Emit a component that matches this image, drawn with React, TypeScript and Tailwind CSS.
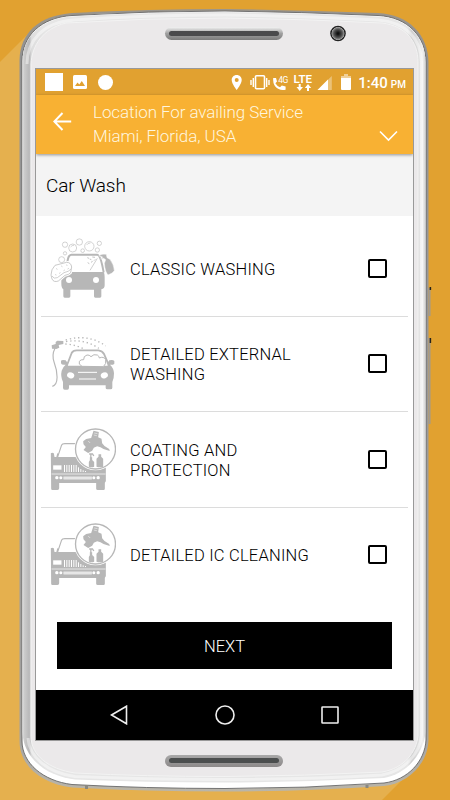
import React from 'react';

interface Service {
  title: string;
  icon: React.ReactNode;
}

const PhoneBody: React.FC = () => (
  <svg className="absolute inset-0" width="450" height="800" viewBox="0 0 450 800" fill="none">
    <defs>
      <linearGradient id="side" x1="22" y1="0" x2="426" y2="0" gradientUnits="userSpaceOnUse">
        <stop offset="0" stopColor="#e4e4e4" />
        <stop offset="0.006" stopColor="#cbcbcb" />
        <stop offset="0.018" stopColor="#b8b8b9" />
        <stop offset="0.024" stopColor="#dedede" />
        <stop offset="0.06" stopColor="#e6e6e6" />
        <stop offset="0.955" stopColor="#e6e6e6" />
        <stop offset="0.964" stopColor="#cfcfcf" />
        <stop offset="0.98" stopColor="#dcdcdc" />
        <stop offset="0.992" stopColor="#f0f0f0" />
        <stop offset="1" stopColor="#cccccc" />
      </linearGradient>
      <linearGradient id="edge" x1="0" y1="9" x2="0" y2="791" gradientUnits="userSpaceOnUse">
        <stop offset="0" stopColor="#9a958c" />
        <stop offset="0.06" stopColor="#929292" />
        <stop offset="0.92" stopColor="#a3a19e" />
        <stop offset="1" stopColor="#b9b5aa" />
      </linearGradient>
      <linearGradient id="slot" x1="0" y1="0" x2="0" y2="1">
        <stop offset="0" stopColor="#f2f2f2" />
        <stop offset="0.5" stopColor="#a0a0a0" />
        <stop offset="1" stopColor="#7b7b7b" />
      </linearGradient>
      <linearGradient id="slotLow" x1="0" y1="0" x2="0" y2="1">
        <stop offset="0" stopColor="#a9a9a9" />
        <stop offset="1" stopColor="#8c8989" />
      </linearGradient>
      <radialGradient id="lens">
        <stop offset="0.1" stopColor="#101010" />
        <stop offset="0.55" stopColor="#555" />
        <stop offset="0.8" stopColor="#999" />
        <stop offset="0.86" stopColor="#222" />
        <stop offset="1" stopColor="#222" />
      </radialGradient>
    </defs>

    <path d="M0 0H450V800H382L410 772L380 740L60 60L30 32L0 62Z" fill="#e1a130" />

    {/* side buttons */}
    <path d="M429.500 288V316M429.500 338V424" stroke="#a09a90" strokeWidth="2" />
    <path d="M430.400 287V290M430.400 338V343" stroke="#26221c" strokeWidth="1.500" />

    <path
      d="M19.500 60C20 33 39 15.500 72 13Q148 9 225 9Q302 10 378 13C409 14.500 428 35 428.500 62V740C428 762 410 783 384 786Q305 791.500 225 791.500Q145 791.500 72 787.500C42 784 19.500 766 19.500 741Z"
      fill="url(#edge)"
    />
    <path
      d="M22 61C22 36 41 17.500 72 15.500Q148 11 225 11Q302 12 378 15.500C408 17 426 37 426 62V740C425 761 408 780 384 783Q305 788.500 225 788.500Q145 788.500 72 784.500C43 781 22 763 22 741Z"
      fill="#fff"
      stroke="#686868"
      strokeWidth="0.900"
    />
    <path
      d="M22.500 61C22.500 37 41 18.500 72 16.500Q148 12 225 12Q302 13 378 16.500C407 18 425.500 37 425.500 62V732C424 753 407 774 384 778Q305 782 225 782.500Q145 782.500 75 779.500C45 776 23 757 22.500 732Z"
      fill="url(#side)"
    />
    {/* soft highlights between bevel and face */}
    <path
      d="M27 64C27 41 43 22 74 20Q148 15 225 15Q302 16 378 20C406 22 421 39 421.500 62V735C420 753 405 771 382 775Q305 779.500 225 779.500Q145 779.500 75 776.500C48 773 29 757 28 738"
      stroke="#fff"
      strokeOpacity="0.45"
      strokeWidth="3"
    />
    <path
      d="M31 64C32 46 42 29 66 23Q145 18 225 18Q305 19 382 23C406 26 418 42 418 62V736C416 752 405 768 382 772Q305 776 225 776.500Q145 776.500 75 773C48 769 31 755 31 736Z"
      fill="#ebe9ea"
      stroke="#f3f3f3"
      strokeWidth="1"
    />
    <path d="M86.500 785V789M367 785V788" stroke="#8a8880" strokeWidth="3" />

    <rect x="165" y="27" width="118" height="13" rx="6.500" fill="url(#slot)" />
    <rect x="169" y="31" width="110" height="5" rx="2.500" fill="#4a4a4c" />
    <rect x="165" y="755" width="118" height="12" rx="6" fill="url(#slotLow)" />
    <rect x="169" y="758" width="110" height="5" rx="2.500" fill="#4b4e4e" />
    <circle cx="338" cy="33.500" r="7.800" fill="url(#lens)" />
  </svg>
);

const WashIcon = () => (
  <svg className="h-[65px] w-[70px] shrink-0" viewBox="30 34 210 195" fill="none" stroke="#b7b7b7">
    <g strokeWidth="1.800">
      <circle cx="87" cy="60" r="8" />
      <circle cx="110" cy="70" r="12" />
      <circle cx="130" cy="52" r="9.500" />
      <circle cx="160" cy="65" r="14" />
      <circle cx="190" cy="56" r="6.500" />
      <circle cx="184" cy="76" r="6.500" />
      <circle cx="140" cy="78" r="5.500" />
      <circle cx="87" cy="86" r="5" />
      <circle cx="77" cy="105" r="9" />
      <path d="M152 61Q155 55 163 55M104 67Q108 61 114 62" />
    </g>
    <path d="M94 114Q96 91 106 90H184Q194 91 203 143" strokeWidth="6" />
    <path d="M80 142H203Q206 146 206 162V182Q206 192 196 194V215Q196 219 192 219H178Q174 219 174 215V195H103V215Q103 219 99 219H86Q82 219 82 215V194Q76 190 76 177V154Z" fill="#b7b7b7" stroke="none" />
    <circle cx="99" cy="166" r="9" fill="#fff" stroke="none" />
    <circle cx="180" cy="166" r="9" fill="#fff" stroke="none" />
    <path d="M57 129L94 113Q105 113 107 127L104 144Q99 150 87 152L67 169Q53 174 48 163L45 151Q47 138 57 129Z" fill="#fff" stroke="#fff" strokeWidth="8" />
    <path d="M57 122L92 113Q105 113 107 127L104 144Q99 150 87 152L67 169Q53 174 48 163L45 151Q45 134 57 122Z" fill="#fff" strokeWidth="2.200" />
    <path d="M48 154Q53 164 64 159L84 144Q99 141 105 133" strokeWidth="2" />
    <path d="M61 132L64 134M76 124L79 126M91 121L94 122M70 146L73 144M83 138L86 136M95 133L98 131M58 150L61 151" strokeWidth="2.500" />
    <path d="M162 137L184 101" strokeWidth="2" />
    <path d="M169 97L177 98M161 103L166 105M154 99L159 101M165 113L170 110M155 114L160 117M174 108L178 104" strokeWidth="2.500" />
    <path d="M188 94Q197 86 211 89L213 99L222 104Q234 120 235 138Q229 147 216 151Q207 142 205 116L209 105L203 101L194 103L200 97Z" fill="#b7b7b7" stroke="#fff" strokeWidth="1.500" />
  </svg>
);

const ExternalIcon = () => (
  <svg className="h-[65px] w-[70px] shrink-0" viewBox="30 21 210 195" fill="none" stroke="#b7b7b7">
    <path d="M57 73Q46 94 55 117C65 143 69 181 49 187" strokeWidth="3.500" />
    <path d="M47 64L59 60V54L64 50L82 51V60L68 63L70 71L61 75L48 74Z" fill="#b7b7b7" stroke="none" />
    <g strokeWidth="4" strokeDasharray="4 8.500">
      <path d="M89 48Q158 28 209 66" />
      <path d="M90 53Q145 43 188 73" />
      <path d="M88 60Q120 62 146 76" />
    </g>
    <path d="M92 126L107 87Q111 79 122 79H187Q199 80 204 90L220 127" strokeWidth="5.500" />
    <path d="M75 110Q78 107 89 109L95 117V125H215V116L220 109Q231 106 235 111V119Q230 124 222 122Q233 132 234 148Q234 165 229 174V191Q229 196 224 196H214Q209 196 209 191V184H99V191Q99 197 94 197H86Q81 197 81 191V174Q73 157 77 140Q80 129 89 122Q77 124 75 118Z" fill="#b7b7b7" stroke="none" />
    <path d="M138 127Q126 121 130 112Q134 106 143 107Q142 96 153 93Q160 92 165 98Q173 89 184 93Q190 97 190 102Q203 96 209 107Q212 120 202 128Z" fill="#fff" strokeWidth="3" />
    <ellipse cx="104" cy="154" rx="11" ry="9" fill="#fff" stroke="none" transform="rotate(20 104 154)" />
    <ellipse cx="205" cy="154" rx="11" ry="9" fill="#fff" stroke="none" transform="rotate(-20 205 154)" />
    <path d="M126 145H183M129 165H180" stroke="#fff" strokeWidth="3" />
  </svg>
);

const CoatingIcon = () => (
  <svg className="h-[65px] w-[70px] shrink-0" viewBox="31.500 39 210 195" fill="none" stroke="#b7b7b7">
    <path d="M66 130L78 94Q80 89 88 89H132M64 130L67 118" strokeWidth="3.500" />
    <path d="M46 118Q50 115 55 118L57 129H192L207 145Q211 150 211 160V202L208 206V224Q208 228 204 228H187Q182 228 182 224V207H71V223Q71 228 66 228H51Q47 228 47 224Z" fill="#b7b7b7" stroke="none" />
    <path d="M53 154H78V167H53Z" fill="#fff" stroke="none" />
    <path d="M87 153V174M94 153V174M101 153V174M108 153V174M115 153V174M122 153V174M129 160V174M136 165V174M143 169V174M150 171V174" stroke="#fff" strokeWidth="3" />
    <path d="M48 180H210" stroke="#fff" strokeWidth="2" />
    <path d="M84 192H169" stroke="#fff" strokeWidth="8" />
    <path d="M84 192H169" strokeWidth="2" />
    <g fill="#fff" stroke="none">
      <circle cx="64" cy="191" r="5" />
      <circle cx="76" cy="191" r="4.500" />
      <circle cx="175" cy="191" r="4.500" />
      <circle cx="188" cy="191" r="5" />
    </g>
    <circle cx="180" cy="105" r="64" fill="#fff" stroke="none" />
    <circle cx="180" cy="105" r="60" strokeWidth="4" />
    <path d="M174 50L190 54L188 70L198 74L200 88L207 96L221 105L223 111L204 105L195 100L185 97L175 101L170 110L158 117L144 108L151 99L144 91L143 82L152 75L167 72Z" fill="#b7b7b7" stroke="none" />
    <path d="M176 57L186 59M175 63L184 65M158 81L164 87" stroke="#fff" strokeWidth="1.500" />
    <path d="M161 120H171L175 126M166 121V132" strokeWidth="4" />
    <path d="M163 130H170V138L176 144V158Q168 162 160 158V144L163 139ZM189 121H197V128L203 134V158Q193 162 183 158V134L189 128Z" fill="#b7b7b7" stroke="none" />
  </svg>
);

const services: Service[] = [
  { title: 'CLASSIC WASHING', icon: <WashIcon /> },
  { title: 'DETAILED EXTERNAL WASHING', icon: <ExternalIcon /> },
  { title: 'COATING AND PROTECTION', icon: <CoatingIcon /> },
  { title: 'DETAILED IC CLEANING', icon: <CoatingIcon /> },
];

const StatusBar: React.FC = () => (
  <div className="flex h-[26px] shrink-0 items-center bg-[#e1a130] pl-[9px] pr-[7px] text-white">
    <div className="h-[18px] w-[18px] bg-white" />
    <svg className="ml-[10px]" width="14" height="14" viewBox="0 0 14 14">
      <rect width="14" height="14" rx="1.500" fill="#fff" />
      <path d="M2 11L4.500 7.500L6.300 9.500L8.800 6L12 11Z" fill="#e1a130" />
    </svg>
    <div className="ml-[11px] h-[15px] w-[15px] rounded-full bg-white" />
    <svg className="ml-auto" width="101" height="20" viewBox="231 72 101 20" fill="none" stroke="#fff">
      <path d="M236.700 75C233.700 75 231.700 77.200 231.700 80C231.700 83.800 236.700 90 236.700 90S241.700 83.800 241.700 80C241.700 77.200 239.700 75 236.700 75ZM236.700 82A2 2 0 1 1 236.700 78A2 2 0 0 1 236.700 82Z" fill="#fff" stroke="none" />
      <rect x="255.500" y="75.800" width="9" height="13" rx="1" strokeWidth="1.600" />
      <path d="M253.300 78V87M266.700 78V87M251 80V85M269 80V85" strokeWidth="1.400" />
      <path d="M273.200 78H276L277 81.600L275.400 83.200Q277 86 280 87.200L281.800 85.500L285.600 86.600V89.700Q279 91 275.300 86.500Q272.700 83 273.200 78Z" fill="#fff" stroke="none" />
      <text x="278.300" y="82.500" fontSize="8.500" fill="#fff" stroke="none" fontFamily="Roboto, sans-serif" textLength="10">4G</text>
      <text x="293.500" y="82.500" fontSize="11" fontWeight="600" fill="#fff" stroke="none" fontFamily="Roboto, sans-serif" textLength="18.500" lengthAdjust="spacingAndGlyphs">LTE</text>
      <path d="M299.700 84V88M308 87V91" strokeWidth="2" />
      <path d="M296.500 87H303L299.700 91ZM304.800 88H311.200L308 84Z" fill="#fff" stroke="none" />
      <path d="M317.500 90L331.800 76V90Z" fill="#fff" fillOpacity="0.35" stroke="none" />
      <path d="M317.500 90L328 79.500V90Z" fill="#fff" stroke="none" />
    </svg>
    <svg className="ml-[9px]" width="10" height="16" viewBox="0 0 10 16">
      <path d="M3 0H7V2H10V5H0V2H3Z" fill="#fff" fillOpacity="0.5" />
      <path d="M0 4H10V15Q10 16 9 16H1Q0 16 0 15Z" fill="#fff" />
    </svg>
    <div className="ml-[7px] mt-[2px] flex items-baseline whitespace-nowrap font-medium">
      <span className="text-[15px] leading-5">1:40</span>
      <span className="ml-[3px] text-[10px]">PM</span>
    </div>
  </div>
);

const Header: React.FC = () => (
  <div className="z-10 flex h-[59px] shrink-0 bg-[#f8b133] pl-[17px] pr-[15px] text-[#fff6df] shadow-[0_1px_3px_rgba(0,0,0,0.4)]">
    <svg className="mt-[17px] shrink-0" width="19" height="19" viewBox="0 0 19 19" fill="none" stroke="#fff" strokeWidth="2">
      <path d="M18.200 9.500H1.500M9.500 1L1.300 9.500L9.500 18" />
    </svg>
    <div className="ml-[21px] mt-[5px] whitespace-nowrap text-[17px] font-light leading-6">
      <p className="tracking-[-0.08px]">Location For availing Service</p>
      <p className="tracking-[-0.05px]">Miami, Florida, USA</p>
    </div>
    <svg className="ml-auto mt-[35px] shrink-0" width="19" height="12" viewBox="0 0 19 12" fill="none" stroke="#fff" strokeWidth="1.600">
      <path d="M1 1.500L9.500 10L18 1.500" />
    </svg>
  </div>
);

const ServiceRow: React.FC<{ service: Service }> = ({ service }) => (
  <label className="mx-[5px] flex h-[95.5px] items-center border-b border-[#dcdcdc] pl-[5px] pr-[21px] last:border-transparent">
    {service.icon}
    <span className="ml-[14px] w-[190px] pr-[10px] pt-[3px] text-[16.5px] font-light leading-5 tracking-[0.22px] text-black">{service.title}</span>
    <input type="checkbox" className="ml-auto h-[19px] w-[19px] shrink-0 appearance-none rounded-[2px] border-2 border-black bg-white" />
  </label>
);

const App: React.FC = () => {
  return (
    <div className="relative h-[800px] w-[450px] overflow-hidden bg-[#e5b04e] font-['Roboto','Liberation_Sans',sans-serif]">
      <PhoneBody />
      <div className="relative ml-[35px] mt-[68px] flex h-[673px] w-[379px] flex-col overflow-hidden border border-[#999] bg-white">
        <StatusBar />
        <Header />
        <div className="flex h-[62px] shrink-0 items-center bg-[#f4f4f4] pl-[10px] pt-[2px] text-[19px] font-light tracking-[-0.1px] text-black">
          Car Wash
        </div>
        <div className="pt-[5px]">
          {services.map((service) => (
            <ServiceRow key={service.title} service={service} />
          ))}
        </div>
        <button className="mx-[21px] mt-[19px] h-[47px] shrink-0 bg-black pt-[3px] text-[16.5px] font-light text-white">
          NEXT
        </button>
        <div className="mt-auto flex h-[50px] shrink-0 items-center justify-between bg-black px-[74px]">
          <svg width="18" height="20" viewBox="0 0 18 20" fill="none" stroke="#eee" strokeWidth="1.600">
            <path d="M1.500 10L16.500 1.200V18.800Z" />
          </svg>
          <svg width="20" height="20" viewBox="0 0 20 20" fill="none" stroke="#eee" strokeWidth="1.600">
            <circle cx="10" cy="10" r="9" />
          </svg>
          <svg width="18" height="18" viewBox="0 0 18 18" fill="none" stroke="#eee" strokeWidth="1.600">
            <rect x="1" y="1" width="16" height="16" rx="0.500" />
          </svg>
        </div>
      </div>
    </div>
  );
};

export default App;
